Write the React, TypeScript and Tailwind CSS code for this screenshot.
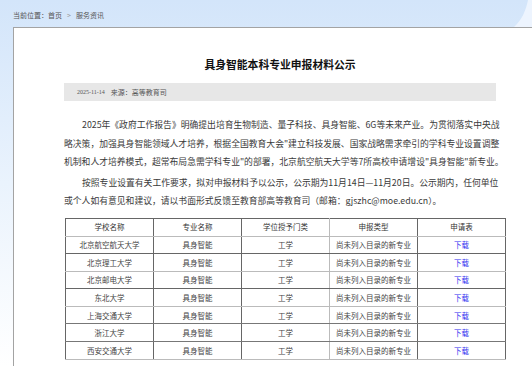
import React from "react";

const ROWS = [
  { school: "北京航空航天大学", line: "border-b-[#666]" },
  { school: "北京理工大学", line: "border-b-[#bbb]" },
  { school: "北京邮电大学", line: "border-b-[#666]" },
  { school: "东北大学", line: "border-b-[#bbb]" },
  { school: "上海交通大学", line: "border-b-[#777]" },
  { school: "浙江大学", line: "border-b-[#777]" },
  { school: "西安交通大学", line: "border-b-[#bbb]" },
];

export default function App() {
  return (
    <div className="w-[532px] h-[366px] overflow-hidden flex flex-col bg-gradient-to-b from-[#d3e5fa] via-[#eaf3fd] to-white font-['Noto_Sans_CJK_SC',sans-serif]">
      {/* Top strip */}
      <div className="relative h-[27px] shrink-0 pl-[13px] pt-[11px] text-[7px] leading-[9px] text-[#555]">
        <span>当前位置：首页</span>
        <span className="mx-[5px] text-[#999]">&gt;</span>
        <span>服务资讯</span>
        <svg className="absolute right-0 top-0" width="40" height="27" viewBox="0 0 40 27">
          <path d="M40 0 L36 0 C34 10 30 20 22 27 L40 27 Z" fill="#f2f8ff" opacity="0.8" />
        </svg>
      </div>

      {/* Panel */}
      <div className="flex-1 ml-[13px] border-l border-t border-[#a3a3a3] bg-white">
        <div className="w-[432px] ml-[50px] pt-[28px]">
          <h1 className="text-center text-[10.8px] leading-[16px] font-bold text-[#111]">
            具身智能本科专业申报材料公示
          </h1>

          <div className="mt-[11px] h-[18px] bg-[#e7e7e7] pl-[13px] flex items-center text-[7px] text-[#555]">
            <span className="font-['Liberation_Serif',serif] text-[6px]">2025-11-14</span>
            <span className="ml-[6px]">来源：高等教育司</span>
          </div>

          <div className="mt-[15px] text-[8.8px] leading-[18.5px] text-[#3a3a3a] whitespace-nowrap">
            <p className="indent-[18px]">
              2025年《政府工作报告》明确提出培育生物制造、量子科技、具身智能、6G等未来产业。为贯彻落实中央战
              <br />
              略决策，加强具身智能领域人才培养，根据全国教育大会"建立科技发展、国家战略需求牵引的学科专业设置调整
              <br />
              机制和人才培养模式，超常布局急需学科专业"的部署，北京航空航天大学等7所高校申请增设"具身智能"新专业。
            </p>
            <p className="indent-[18px] mt-[2px]">
              按照专业设置有关工作要求，拟对申报材料予以公示，公示期为11月14日—11月20日。公示期内，任何单位
              <br />
              或个人如有意见和建议，请以书面形式反馈至教育部高等教育司（邮箱：gjszhc@moe.edu.cn）。
            </p>
          </div>

          <table className="mt-[7px] ml-[1px] w-[441px] table-fixed border-collapse text-[7.5px] text-center text-[#444]">
            <thead>
              <tr className="h-[18px] text-[#333]">
                <th className="font-normal border border-[#666] border-b-[#bbb]">学校名称</th>
                <th className="font-normal border border-[#666] border-b-[#bbb]">专业名称</th>
                <th className="font-normal border border-[#666] border-r-[#bbb] border-b-[#bbb]">学位授予门类</th>
                <th className="font-normal border border-[#666] border-b-[#bbb]">申报类型</th>
                <th className="font-normal border border-[#666] border-b-[#bbb]">申请表</th>
              </tr>
            </thead>
            <tbody>
              {ROWS.map((r) => (
                <tr key={r.school} className="h-[17.6px]">
                  <td className={`border border-[#666] ${r.line}`}>{r.school}</td>
                  <td className={`border border-[#666] ${r.line}`}>具身智能</td>
                  <td className={`border border-[#666] border-r-[#bbb] ${r.line}`}>工学</td>
                  <td className={`border border-[#666] ${r.line}`}>尚未列入目录的新专业</td>
                  <td className={`border border-[#666] ${r.line} text-[#2f2fef]`}>下载</td>
                </tr>
              ))}
            </tbody>
          </table>
        </div>
      </div>
    </div>
  );
}
